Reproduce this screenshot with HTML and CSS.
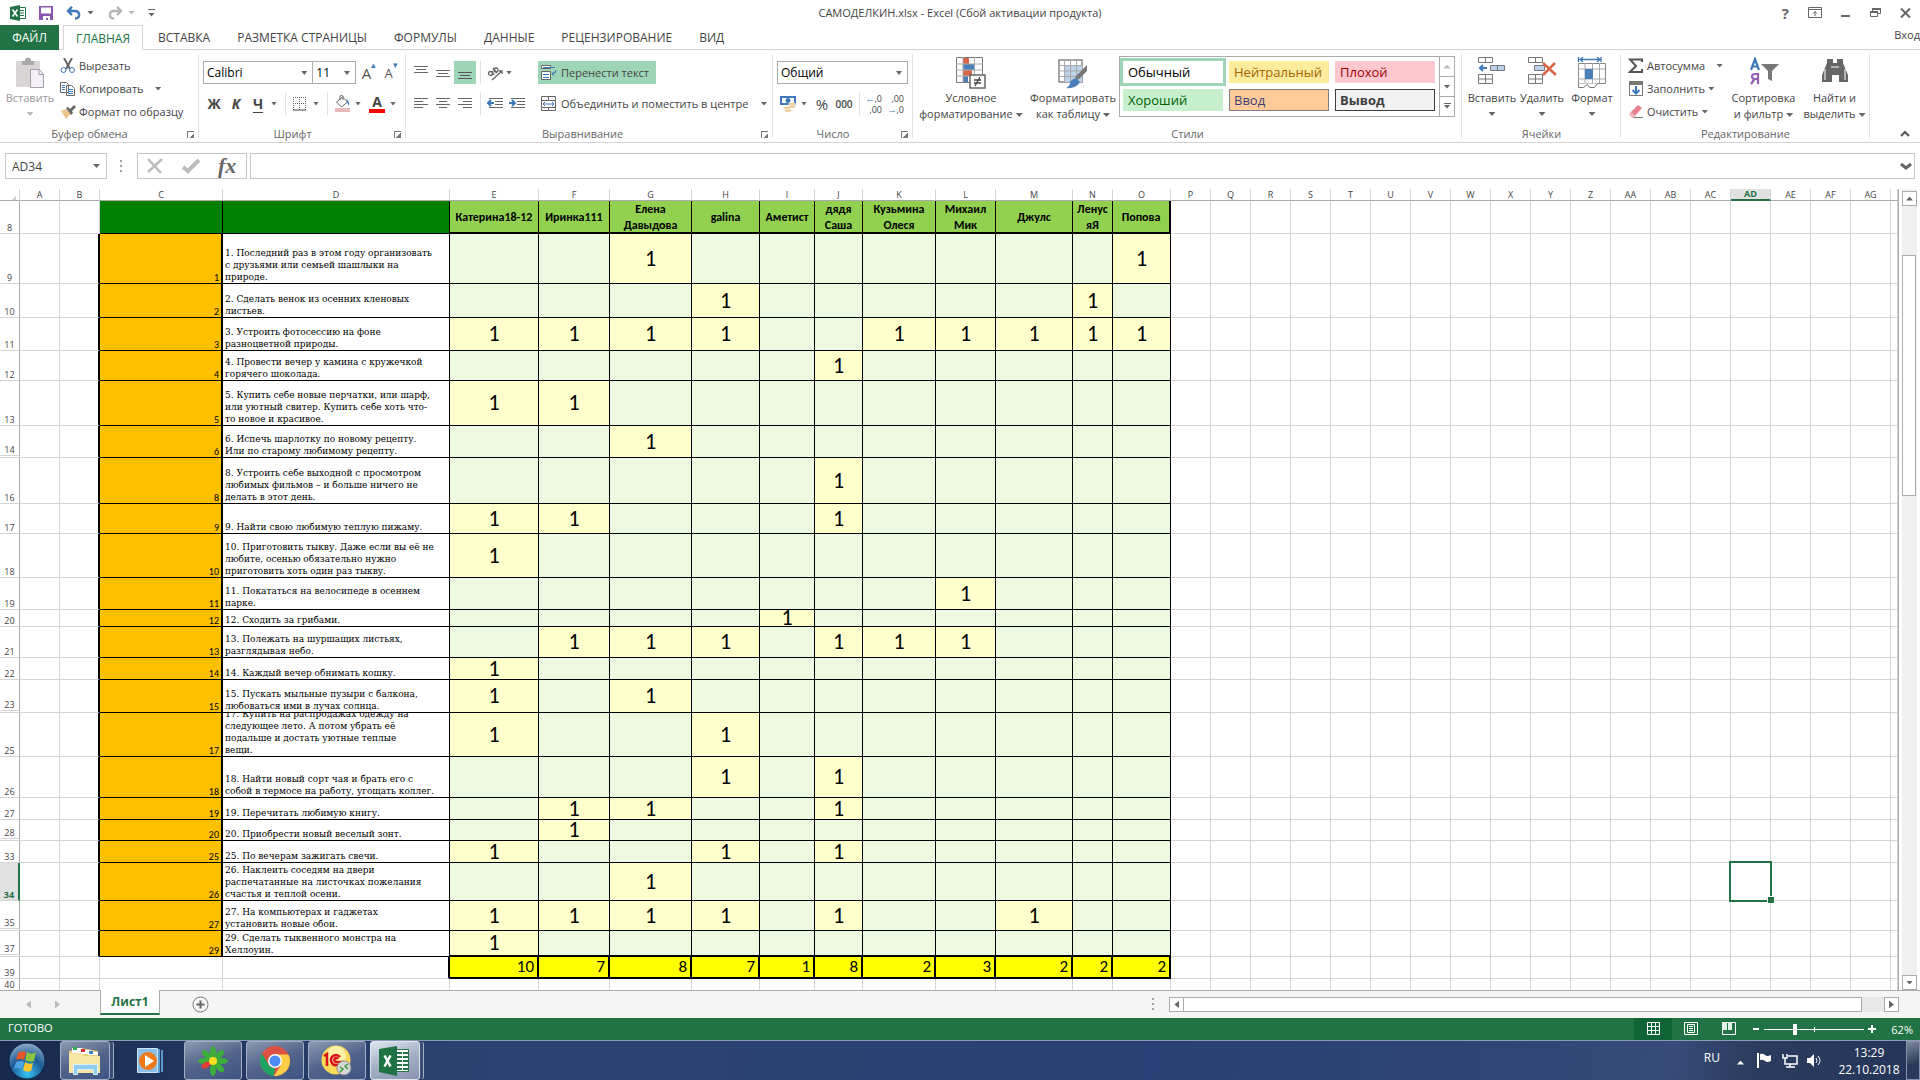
FILE: index.html
```html
<!DOCTYPE html>
<html lang="ru">
<head>
<meta charset="utf-8">
<title>САМОДЕЛКИН.xlsx - Excel</title>
<link rel="stylesheet" href="styles.css">
</head>
<body>
<div class="app">
  <header class="titlebar">
    <div class="quick">
      <svg class="q-logo" width="16" height="16" viewBox="0 0 16 16"><path fill="#217346" d="M0 2l10-2v16L0 14z"/><path fill="#fff" stroke="#217346" d="M10 2.500h5.500v11H10"/><path stroke="#217346" d="M10 5.500h4M10 8h4M10 10.500h4"/><path stroke="#fff" stroke-width="1.600" d="M2.500 4.500l5 7M7.500 4.500l-5 7"/></svg>
      <button class="ghost" aria-label="Сохранить"><svg width="14" height="14" viewBox="0 0 14 14"><path fill="#8a57b0" d="M0 0h14v14H0z"/><path fill="#fff" d="M2 1.500h10v6H2zM4 10h7v4H9v-2H7v2H4z"/></svg></button>
      <button class="ghost drop" aria-label="Отменить"><svg width="16" height="14" viewBox="0 0 16 14"><path fill="none" stroke="#3e78b8" stroke-width="2.400" d="M2 5h7c5 0 6 7 0 7.500M6 .8L2 5l4 4"/></svg><i class="arr"></i></button>
      <button class="ghost drop dim" aria-label="Вернуть"><svg width="16" height="14" viewBox="0 0 16 14"><path fill="none" stroke="#b5b5b5" stroke-width="2.400" d="M14 5H7c-5 0-6 7 0 7.500M10 .8L14 5l-4 4"/></svg><i class="arr"></i></button>
      <button class="ghost more" aria-label="Настройка панели"><i class="arr"></i></button>
    </div>
    <div class="doc-title">САМОДЕЛКИН.xlsx - Excel (Сбой активации продукта)</div>
    <div class="win">
      <button class="ghost help" aria-label="Справка">?</button>
      <button class="ghost" aria-label="Параметры ленты"><svg width="14" height="11" viewBox="0 0 14 11"><path fill="none" stroke="#666" d="M.5.500h13v10H.500zM.5 2.500h13M7 9V4.500M5 6.500l2-2 2 2"/></svg></button>
      <button class="ghost" aria-label="Свернуть"><svg width="10" height="10"><path fill="#666" d="M0 7h9v2H0z"/></svg></button>
      <button class="ghost" aria-label="Восстановить"><svg width="11" height="10" viewBox="0 0 11 10"><path fill="none" stroke="#666" d="M2.500 3V.500h8v5H8M.5 3.500h7v5H.500z"/><path fill="#666" d="M2 0h9v2H2zM0 3h8v2H0z"/></svg></button>
      <button class="ghost" aria-label="Закрыть"><svg width="11" height="10"><path stroke="#666" stroke-width="2" d="M1 .5l9 9M10 .5l-9 9"/></svg></button>
    </div>
  </header>

  <nav class="tabs">
    <a href="#" class="tab file">ФАЙЛ</a>
    <a href="#" class="tab on">ГЛАВНАЯ</a>
    <a href="#" class="tab">ВСТАВКА</a>
    <a href="#" class="tab">РАЗМЕТКА СТРАНИЦЫ</a>
    <a href="#" class="tab">ФОРМУЛЫ</a>
    <a href="#" class="tab">ДАННЫЕ</a>
    <a href="#" class="tab">РЕЦЕНЗИРОВАНИЕ</a>
    <a href="#" class="tab">ВИД</a>
    <a href="#" class="signin">Вход</a>
  </nav>

  <section class="ribbon">
    <div class="group g-clip">
      <div class="body">
        <button class="big dim"><svg width="30" height="32" viewBox="0 0 30 32"><rect x="1" y="4" width="24" height="26" rx="1" fill="#d9d4d6"/><path fill="#a9a9a9" d="M7 4h3V2q3-3 6 0v2h3v4H7z"/><path fill="#f4eff8" stroke="#a3a0a6" d="M15.500 12.500h9l4 5v13h-13z"/><path fill="none" stroke="#a3a0a6" d="M24 12.500v5h5"/></svg><span>Вставить</span><i class="arr"></i></button>
        <div class="stack">
          <button class="row"><svg width="16" height="16" viewBox="0 0 16 16"><path stroke="#666" stroke-width="2" d="M4 0l6 11M12 0L6 11"/><circle cx="3.500" cy="12" r="2.500" fill="none" stroke="#3e78b8"/><circle cx="12" cy="12" r="2.500" fill="none" stroke="#3e78b8"/></svg><span>Вырезать</span></button>
          <button class="row"><svg width="16" height="16" viewBox="0 0 16 16"><path fill="#fff" stroke="#666" d="M.5 1.500h6l2 2v8h-8zM6.500 4.500h5l3 3v7h-8z"/><path stroke="#3e78b8" d="M2 4.500h3M2 6.500h3M2 8.500h3M8 8.500h5M8 10.500h5M8 12.500h5"/></svg><span>Копировать</span><i class="arr far"></i></button>
          <button class="row"><svg width="16" height="16" viewBox="0 0 16 16"><path fill="#ecc58b" d="M1 7l5-2 5 5-5 5z"/><path fill="#666" d="M6 4l2-1 2 2 4-4 2 2-4 4 1 2-2 2z"/></svg><span>Формат по образцу</span></button>
        </div>
      </div>
      <div class="caption">Буфер обмена</div><i class="launch"></i>
    </div>

    <div class="group g-font">
      <div class="body lines">
        <div class="line">
          <label class="combo c-font"><select aria-label="Шрифт"><option>Calibri</option></select></label><label class="combo c-size"><select aria-label="Размер"><option>11</option></select></label>
          <button class="tool wide22 letter">A<sup>▴</sup></button><button class="tool wide22 letter sm">A<sup>▾</sup></button>
        </div>
        <div class="line">
          <button class="tool wide22 letter b">Ж</button><button class="tool wide22 letter b it">К</button><button class="tool wide22 letter b un">Ч</button><i class="arr gap"></i><i class="sep"></i>
          <button class="tool wide22" aria-label="Границы"><svg width="14" height="14" viewBox="0 0 14 14"><path fill="none" stroke="#666" stroke-dasharray="1 1" d="M.5 0v13M6.500 0v13M12.500 0v13M0 .5h13M0 6.500h13"/><path stroke="#444" d="M0 13h13"/></svg></button><i class="arr gap"></i><i class="sep"></i>
          <button class="tool wide22" aria-label="Заливка"><svg width="17" height="17" viewBox="0 0 17 17"><path fill="#e8b9b9" d="M1 13h15v4H1z"/><path fill="#fff" stroke="#666" d="M2.500 7l6-5 5 5-6 5z"/><path fill="none" stroke="#666" d="M6 5V1q1.500-1.500 3 0v4"/><path fill="#3e78b8" d="M12 4q4 2 3 7l-2-4z"/></svg></button><i class="arr gap"></i>
          <button class="tool wide22 letter b fc">A</button><i class="arr gap"></i>
        </div>
      </div>
      <div class="caption">Шрифт</div><i class="launch"></i>
    </div>

    <div class="group g-align">
      <div class="body">
        <div class="lines g-a1">
          <div class="line">
            <button class="tool wide22" aria-label="По верху"><svg width="14" height="14"><path stroke="#666" d="M0 .5h14M2 3.500h10M0 6.500h14"/></svg></button><button class="tool wide22" aria-label="По середине"><svg width="14" height="14"><path stroke="#666" d="M0 4.500h14M2 7.500h10M0 10.500h14"/></svg></button><button class="tool wide22 lit" aria-label="По низу"><svg width="14" height="14"><path stroke="#555" d="M0 6.500h14M2 9.500h10M0 12.500h14"/></svg></button>
            <i class="sep"></i><button class="tool wide22" aria-label="Ориентация"><svg width="16" height="16" viewBox="0 0 16 16"><g fill="none" stroke="#666" stroke-width="1.300"><circle cx="3.500" cy="8.500" r="2"/><path d="M5 6l2 4M6 3l4 5"/><circle cx="9" cy="5" r="2"/><path d="M5 15L15 6M15 9V6h-3"/></g></svg></button><i class="arr gap"></i>
          </div>
          <div class="line">
            <button class="tool wide22" aria-label="По левому краю"><svg width="14" height="12"><path stroke="#666" d="M0 .5h14M0 3.500h9M0 6.500h14M0 9.500h9"/></svg></button><button class="tool wide22" aria-label="По центру"><svg width="14" height="12"><path stroke="#666" d="M0 .5h14M3 3.500h8M0 6.500h14M3 9.500h8"/></svg></button><button class="tool wide22" aria-label="По правому краю"><svg width="14" height="12"><path stroke="#666" d="M0 .5h14M5 3.500h9M0 6.500h14M5 9.500h9"/></svg></button>
            <i class="sep"></i><button class="tool wide22" aria-label="Уменьшить отступ"><svg width="16" height="12"><path stroke="#666" d="M2 .5h14M8 3.500h8M8 6.500h8M2 9.500h14"/><path fill="none" stroke="#3e78b8" stroke-width="2" d="M7 5H1M4 2L1 5l3 3"/></svg></button><button class="tool wide22" aria-label="Увеличить отступ"><svg width="16" height="12"><path stroke="#666" d="M2 .5h14M8 3.500h8M8 6.500h8M2 9.500h14"/><path fill="none" stroke="#3e78b8" stroke-width="2" d="M0 5h6M3 2l3 3-3 3"/></svg></button>
          </div>
        </div>
        <div class="lines g-a2">
          <div class="line"><button class="tool text lit"><svg width="16" height="16" viewBox="0 0 16 16"><path fill="#fff" stroke="#666" d="M.5.500h9v3h-9zM.5 6.500h9v8h-9z"/><path fill="none" stroke="#3e78b8" d="M2 2.500h12M2 9.500h6M2 12.500h6M15 5q0 4-4 4M13 6.500L11 9l2 2"/></svg><span>Перенести текст</span></button></div>
          <div class="line"><button class="tool text"><svg width="16" height="16" viewBox="0 0 16 16"><path fill="none" stroke="#666" d="M.5.500h14v14H.500zM.5 4.500h14M.5 11.500h14M7.500 0v4M7.500 12v3"/><path fill="none" stroke="#3e78b8" d="M2 8h11M4 6L2 8l2 2M11 6l2 2-2 2"/></svg><span>Объединить и поместить в центре</span><i class="arr far"></i></button></div>
        </div>
      </div>
      <div class="caption shift">Выравнивание</div><i class="launch"></i>
    </div>

    <div class="group g-num">
      <div class="body lines">
        <div class="line"><label class="combo c-num"><select aria-label="Формат числа"><option>Общий</option></select></label></div>
        <div class="line">
          <button class="tool wide22" aria-label="Денежный"><svg width="16" height="16" viewBox="0 0 16 16"><path fill="#3e78b8" d="M0 0h16v9H0z"/><path fill="#fff" d="M2 2h12v5H2z"/><circle cx="8" cy="4.500" r="2.500" fill="#3e78b8"/><g fill="#ecc58b" stroke="#fff" stroke-width=".5"><ellipse cx="12" cy="8" rx="3.500" ry="1.500"/><ellipse cx="12" cy="10.500" rx="3.500" ry="1.500"/><ellipse cx="7" cy="12" rx="3.500" ry="1.500"/><ellipse cx="8" cy="14.500" rx="3.500" ry="1.500"/></g></svg></button><i class="arr gap"></i>
          <button class="tool wide22 pct">%</button><button class="tool wide22 zeros">000</button><i class="sep"></i>
          <button class="tool wide22 dec"><span><b>←</b>,0</span><span>,00</span></button><button class="tool wide22 dec"><span>,00</span><span><b>→</b>,0</span></button>
        </div>
      </div>
      <div class="caption">Число</div><i class="launch"></i>
    </div>

    <div class="group g-style">
      <div class="body">
        <button class="big w116"><svg width="30" height="32" viewBox="0 0 30 32"><path fill="#fff" stroke="#777" d="M.5.500h26v25H.500z"/><path fill="#dc6547" d="M7 1h6v6H7zM7 13h9v6H7z"/><path fill="#4a7fb9" d="M7 7h11v6H7zM7 19h5v6H7z"/><path stroke="#aaa" d="M0 7h27M0 13h27M0 19h27M7 0v26M18.500 0v26"/><path fill="#fff" stroke="#666" stroke-width="1.500" d="M14 18h15v13H14z"/><path stroke="#444" stroke-width="1.300" d="M18 23h7M18 26h7M24 20l-5 9"/></svg><span>Условное</span><span>форматирование<i class="arr"></i></span></button>
        <button class="big w88"><svg width="30" height="32" viewBox="0 0 30 32"><path fill="#fff" stroke="#888" stroke-width="1.500" d="M1 3h23v22H1z"/><path fill="#bcd0e8" d="M7 8h17v17H7z"/><path stroke="#aaa" d="M1 8.500h23M1 14h23M1 19.500h23M6.500 3v22M12.500 3v22M18.500 3v22"/><path fill="#777" d="M29 8v6l-9 9-3-3z"/><path fill="#4a7fb9" d="M18 21l4 4q-4 7-14 6 4-2 4-5t6-5z"/></svg><span>Форматировать</span><span>как таблицу<i class="arr"></i></span></button>
        <div class="gallery">
          <div class="swatches">
            <button class="sw normal">Обычный</button><button class="sw neutral">Нейтральный</button><button class="sw bad">Плохой</button>
            <button class="sw good">Хороший</button><button class="sw input">Ввод</button><button class="sw output">Вывод</button>
          </div>
          <div class="scroller"><button aria-label="Вверх" class="dim"><i class="arr up"></i></button><button aria-label="Вниз"><i class="arr"></i></button><button aria-label="Ещё" class="more"><i class="arr"></i></button></div>
        </div>
      </div>
      <div class="caption">Стили</div>
    </div>

    <div class="group g-cells">
      <div class="body">
        <button class="big w50"><svg width="30" height="32" viewBox="0 0 30 32"><g fill="#fff" stroke="#777"><path d="M1.500.500h14v5h-14zM8.500.500v5M1.500 17.500h14v9h-14zM8.500 17.500v9M1.500 22h14"/></g><path fill="#bcd0e8" stroke="#777" d="M13.500 8.500h14v5h-14zM20.500 8.500v5"/><path fill="none" stroke="#3e78b8" stroke-width="2" d="M10 11H3M6 8l-3 3 3 3"/></svg><span>Вставить</span><i class="arr"></i></button>
        <button class="big w50"><svg width="30" height="32" viewBox="0 0 30 32"><g fill="#fff" stroke="#777"><path d="M1.500.500h14v5h-14zM8.500.500v5M1.500 17.500h14v9h-14zM8.500 17.500v9M1.500 22h14"/></g><path fill="#bcd0e8" stroke="#777" d="M7.500 8.500h10v5h-10z"/><path stroke="#dc6547" stroke-width="2.500" d="M16 6l13 12M28 6L16 18"/></svg><span>Удалить</span><i class="arr"></i></button>
        <button class="big w50"><svg width="30" height="32" viewBox="0 0 30 32"><path fill="none" stroke="#3e78b8" stroke-width="1.300" d="M1.500 0v5M24 0v5M3 2.500h20M6 0L3 2.500 6 5M20 0l3 2.500L20 5"/><path fill="#fff" stroke="#888" d="M1.500 6.500h27v20h-27z"/><path stroke="#aaa" d="M1 12h27M1 22h27M8 6v20M15.500 6v20M22.500 6v20"/><path fill="#4a7fb9" d="M8 12h8v10H8z"/><path fill="#fff" stroke="#777" d="M1.500 26.500v4h5l4-3 2 3h5l3-4"/></svg><span>Формат</span><i class="arr"></i></button>
      </div>
      <div class="caption">Ячейки</div>
    </div>

    <div class="group g-edit">
      <div class="body">
        <div class="stack">
          <button class="row"><svg width="16" height="16" viewBox="0 0 16 16"><path fill="none" stroke="#555" stroke-width="2" d="M14 4V1.500H2L8 8l-6 6h12V11"/></svg><span>Автосумма</span><i class="arr far"></i></button>
          <button class="row"><svg width="16" height="16" viewBox="0 0 16 16"><path fill="#fff" stroke="#777" d="M1.500.500h13v14h-13z"/><path fill="#777" d="M1 0h14v4H1z"/><path fill="none" stroke="#3e78b8" stroke-width="2" d="M8 5v7M4.500 9L8 12.500 11.500 9"/></svg><span>Заполнить</span><i class="arr"></i></button>
          <button class="row"><svg width="16" height="16" viewBox="0 0 16 16"><path fill="#e8828f" d="M2 9l8-8 4 3-8 9z"/><path fill="#f3b5bd" d="M1 10l2-2 5 4-2 2H4z"/><path stroke="#777" d="M6 13.500h9"/></svg><span>Очистить</span><i class="arr"></i></button>
        </div>
        <button class="big w72"><svg width="30" height="32" viewBox="0 0 30 32"><path fill="none" stroke="#3e78b8" stroke-width="2.200" d="M2 13L6 2l4 11M3.500 9.500h5"/><path fill="none" stroke="#9460b8" stroke-width="2.200" d="M9 27V17H6q-3 0-3 2.500T6 22h3M5.500 22L2 27"/><path fill="#777" d="M12 7h18l-7 7v10l-4-2v-8z"/></svg><span>Сортировка</span><span>и фильтр<i class="arr"></i></span></button>
        <button class="big w72"><svg width="30" height="32" viewBox="0 0 30 32"><path fill="#666" d="M7 2h6v4h4V2h6v4l5 12v7h-9v-7h-3l-1 0h-3v7H2v-7L7 6z"/><path stroke="#fff" d="M5 12v11M25 12v11M11 10h8"/></svg><span>Найти и</span><span>выделить<i class="arr"></i></span></button>
      </div>
      <div class="caption">Редактирование</div>
    </div>
    <button class="ghost collapse" aria-label="Свернуть ленту"><svg width="10" height="7"><path fill="none" stroke="#555" stroke-width="2" d="M1 6l4-4 4 4"/></svg></button>
  </section>

  <section class="formula">
    <label class="namebox"><input aria-label="Имя ячейки" value="AD34"><i class="arr"></i></label>
    <span class="grip"></span>
    <div class="fx"><svg width="18" height="16" viewBox="0 0 18 16"><path stroke="#bbb" stroke-width="2.400" d="M2 1l13 14M16 1L2 14"/></svg><svg width="20" height="16" viewBox="0 0 20 16"><path fill="none" stroke="#bbb" stroke-width="4" d="M2 9l5 4L18 2"/></svg><span class="fxi">fx</span></div>
    <label class="fbar"><input aria-label="Строка формул"><svg width="12" height="9" viewBox="0 0 12 9"><path fill="none" stroke="#666" stroke-width="3" d="M1 2l5 4 5-4"/></svg></label>
  </section>

  <main class="work">
    <div class="sheet"><table id="grid"></table></div>
    <div class="vscroll"><button aria-label="Вверх"><i class="arr up"></i></button><div class="vthumb"></div><div class="vrest"></div><button aria-label="Вниз"><i class="arr"></i></button></div>
  </main>

  <footer class="sheets">
    <div class="nav"><i class="tri left"></i><i class="tri right"></i></div>
    <button class="sheet-tab">Лист1</button>
    <button class="ghost add" aria-label="Новый лист"><svg width="17" height="17" viewBox="0 0 17 17"><circle cx="8.500" cy="8.500" r="7.500" fill="none" stroke="#777"/><path stroke="#666" stroke-width="2" d="M4.500 8.500h8M8.500 4.500v8"/></svg></button>
    <span class="grip push"></span>
    <div class="hscroll"><button aria-label="Влево"><i class="tri left"></i></button><div class="hthumb"></div><div class="hrest"></div><button aria-label="Вправо"><i class="tri right"></i></button></div>
  </footer>

  <div class="status">
    <span class="ready">ГОТОВО</span>
    <button class="view on" aria-label="Обычный"><svg width="13" height="13"><path fill="none" stroke="#fff" d="M.5.500h12v12H.500zM4.500 0v13M8.500 0v13M0 4.500h13M0 8.500h13"/></svg></button>
    <button class="view" aria-label="Разметка страницы"><svg width="14" height="13"><path fill="none" stroke="#fff" d="M.5.500h13v12H.500zM3.500 2.500h7v8h-7zM5 4.500h4M5 6.500h4M5 8.500h4"/></svg></button>
    <button class="view" aria-label="Страничный"><svg width="14" height="13"><path fill="none" stroke="#fff" d="M.5.500h13v12H.500z"/><path fill="#e3f0e8" d="M0 0h5v8H0zM6 0h4v8H6z"/></svg></button>
    <div class="zoom"><button aria-label="Уменьшить"><svg width="8" height="8"><path fill="#fff" d="M1 3h6v2H1z"/></svg></button><input type="range" min="0" max="100" value="30" aria-label="Масштаб"><button aria-label="Увеличить"><svg width="8" height="8"><path fill="#fff" d="M0 3h8v2H0zM3 0h2v8H3z"/></svg></button></div>
    <span class="pc">62%</span>
  </div>

  <div class="taskbar">
    <button class="orb" aria-label="Пуск"><svg width="38" height="38" viewBox="0 0 38 38"><defs><radialGradient id="o" cx=".5" cy=".85" r=".9"><stop offset="0" stop-color="#37c4f5"/><stop offset=".5" stop-color="#1d5c97"/><stop offset="1" stop-color="#9db6cc"/></radialGradient></defs><circle cx="19" cy="19" r="18" fill="url(#o)" stroke="#0d2343"/><path fill="#e8562a" d="M10 11q4-3 8-1l-2 8q-4-2-8 0z"/><path fill="#8cc63f" d="M19 10q5 3 9 0l-2 9q-4 2-9-1z"/><path fill="#4fa3e3" d="M8 20q4-2 8 0l-2 7q-4-2-8 0z"/><path fill="#fcc62d" d="M17 20q4 3 8 1l-2 8q-4 2-8-1z"/></svg></button>
    <button class="task pile" aria-label="Проводник"><svg width="34" height="30" viewBox="0 0 34 30"><path fill="#e8cf82" d="M1 5l12-3 17 3v22H1z"/><path fill="#fff" d="M4 2h10v5H4zM12 4h10v4H12zM20 6h10v3H20z"/><path fill="#2bb24a" d="M5 1h4v3H5z"/><path fill="#d33" d="M13 3h4v3h-4z"/><path fill="#38c" d="M21 5h4v3h-4z"/><path fill="#f6e5a4" d="M1 7h12l3 3h16v17H1z"/><path fill="#8fcdf0" stroke="#d8f0fc" d="M5.500 18.500h24v10h-4v-5h-16v5h-4z"/></svg></button>
    <button class="task plain" aria-label="Проигрыватель"><svg width="28" height="26" viewBox="0 0 28 26"><path fill="#5b9bd0" d="M20 1h3v24h-3zM24 2h2v22h-2z"/><path fill="#8dbfe6" stroke="#cfe5f6" d="M.5.500h20v24H.500z"/><circle cx="11" cy="13" r="9" fill="#f07a1a"/><path fill="#fff" d="M8 7l9 6-9 6z"/></svg></button>
    <button class="task" aria-label="ICQ"><svg width="30" height="30" viewBox="-15 -15 30 30"><g fill="#3cae3a"><ellipse cy="-9" rx="3" ry="6"/><ellipse cy="-9" rx="3" ry="6" transform="rotate(45)"/><ellipse cy="-9" rx="3" ry="6" transform="rotate(90)"/><ellipse cy="-9" rx="3" ry="6" transform="rotate(135)"/><ellipse cy="-9" rx="3" ry="6" transform="rotate(180)"/><ellipse cy="-9" rx="3" ry="6" transform="rotate(270)"/><ellipse cy="-9" rx="3" ry="6" transform="rotate(315)"/></g><ellipse cy="-8" rx="3" ry="5" fill="#e33d34" transform="rotate(240)"/><circle r="4" fill="#ffdf1f"/></svg></button>
    <button class="task" aria-label="Chrome"><svg width="30" height="30" viewBox="-15 -15 30 30"><circle r="15" fill="#dd5144"/><path fill="#1da462" d="M-13-7.500L-5.500 5 0 7.500-1 15A15 15 0 0 1-13-7.500z"/><path fill="#ffcd46" d="M0-6.500h13.500A15 15 0 0 1-1 15L6 4z"/><circle r="7" fill="#fff"/><circle r="5.500" fill="#4c8bf5"/></svg></button>
    <button class="task" aria-label="1С"><svg width="32" height="32" viewBox="0 0 32 32"><circle cx="15" cy="15" r="14.500" fill="#fbd95a"/><circle cx="15" cy="11" r="10" fill="#fff0a8"/><path fill="none" stroke="#d8151b" stroke-width="2.500" d="M3 11l3-2v12M19 12a5 5 0 1 0-3 8h7M17 14a2 2 0 1 0-2 3h8"/><circle cx="23" cy="23" r="7" fill="#d6d6d6" stroke="#8d8d8d"/><path fill="none" stroke="#3b9a3b" stroke-width="1.500" d="M19 22l3 2-3 3M27 19l-3 2 3 3"/></svg></button>
    <button class="task pile active" aria-label="Excel"><svg width="32" height="30" viewBox="0 0 32 30"><path fill="#fff" stroke="#217346" d="M17 3.500h12.500v22H17z"/><path stroke="#217346" stroke-width="2" stroke-dasharray="5 1" d="M18 7h11M18 11h11M18 15h11M18 19h11M18 23h11"/><path fill="#1f7244" d="M0 3l18-3v30L0 26z"/><path stroke="#fff" stroke-width="2.500" d="M5.500 9.500l6 11M11.500 9.500l-6 11"/></svg></button>
    <div class="tray">
      <span class="lang">RU</span><i class="arr up"></i>
      <svg width="16" height="16" viewBox="0 0 16 16"><path fill="#fff" d="M0 0h2v15H0zM3 1q3-1 5 1t6 0v6q-4 2-6 0T3 7z"/></svg>
      <svg width="16" height="16" viewBox="0 0 16 16"><path fill="none" stroke="#fff" stroke-width="1.500" d="M6 3h9v8H3V8M1 1v4h4V1M3 5v3M4 14h9M8 11v3"/></svg>
      <svg width="15" height="15" viewBox="0 0 15 15"><path fill="#fff" d="M0 5h3l4-4v13L3 10H0z"/><path fill="none" stroke="#fff" d="M9 5q2 2.500 0 5M11 3q4 4.500 0 9"/></svg>
      <div class="clock"><span>13:29</span><span>22.10.2018</span></div>
    </div>
    <button class="peek" aria-label="Свернуть все окна"></button>
  </div>
</div>
<script src="sheet.js"></script>
</body>
</html>
```

FILE: styles.css
```css
* { box-sizing: border-box; }
body { margin: 0; font-family: "Open Sans", "Noto Sans", sans-serif; font-size: 12px; color: #444; background: #fff; overflow: hidden; }
button, input, select { font: inherit; color: inherit; margin: 0; padding: 0; border: 0; background: none; border-radius: 0; }
a { color: inherit; text-decoration: none; }
svg { display: block; flex: none; fill: none; }
.app { height: 100vh; display: flex; flex-direction: column; }

.arr { display: inline-block; flex: none; width: 7px; height: 4px; background: #666; clip-path: polygon(0 0, 100% 0, 50% 100%); vertical-align: middle; }
.arr.up { clip-path: polygon(50% 0, 100% 100%, 0 100%); }
.arr.far { margin-left: 8px; }
.arr.gap { width: 6px; }
.dim .arr { background: #bbb; }
.tri { width: 5px; height: 8px; background: #666; clip-path: polygon(0 0, 100% 50%, 0 100%); }
.tri.left { clip-path: polygon(100% 0, 0 50%, 100% 100%); }
.ghost { display: flex; align-items: center; justify-content: center; }
.grip { width: 2px; height: 12px; background: repeating-linear-gradient(#a0a0a0 0 2px, transparent 2px 5px); }

/* title */
.titlebar { display: grid; grid-template-columns: 1fr auto 1fr; height: 25px; flex: none; align-items: center; }
.quick { display: flex; align-items: center; gap: 13px; padding-left: 10px; }
.quick .drop { gap: 5px; }
.quick .more { padding-top: 4px; }
.quick .more, .scroller .more { background: linear-gradient(#666, #666) center 0 / 7px 1px no-repeat; }
.doc-title { font-size: 11px; }
.win { display: flex; justify-content: flex-end; align-items: center; gap: 19px; padding-right: 9px; }
.help { font-weight: 700; font-size: 15px; color: #666; line-height: 16px; }

/* tabs */
.tabs { display: flex; height: 25px; flex: none; border-bottom: 1px solid #d4d4d4; align-items: flex-start; }
.tab { height: 25px; line-height: 26px; padding: 0 12px; border: 1px solid transparent; border-width: 0 1px; margin-right: 1px; }
.tab.file { width: 59px; padding: 0; text-align: center; background: #217346; color: #fff; margin-right: 4px; border: 0; }
.tab.on { width: 80px; padding: 0; text-align: center; color: #217346; background: #fff; border: 1px solid #d4d4d4; border-bottom: 0; line-height: 25px; margin-right: 2px; }
.signin { margin-left: auto; line-height: 20px; font-size: 11px; }

/* ribbon */
.ribbon { display: flex; height: 93px; border-bottom: 1px solid #d4d4d4; flex: none; font-size: 11px; }
.group { position: relative; display: flex; flex-direction: column; flex: none; padding-top: 4px; background: linear-gradient(#e1e1e1, #e1e1e1) right 4px / 1px 84px no-repeat; }
.g-clip { width: 199px; } .g-font { width: 207px; } .g-align { width: 367px; } .g-num { width: 140px; }
.g-style { width: 549px; } .g-cells { width: 159px; } .g-edit { width: 249px; }
.body { display: flex; height: 71px; flex: none; }
.caption { text-align: center; color: #666; line-height: 18px; padding-right: 20px; }
.g-style .caption, .g-cells .caption { padding-right: 0; }
.g-edit .caption { padding-right: 0; }
.caption.shift { text-align: left; padding-left: 136px; }
.launch { position: absolute; right: 5px; bottom: 4px; width: 7px; height: 7px; border: 1px solid #777; border-width: 1px 0 0 1px; background: linear-gradient(135deg, transparent 50%, #777 50%) 1px 1px / 5px 5px no-repeat; }
.collapse { margin-left: auto; align-self: flex-end; width: 30px; height: 18px; }
.big { display: flex; flex-direction: column; align-items: center; padding-top: 3px; line-height: 16px; white-space: nowrap; }
.big svg { margin-bottom: 1px; }
.big > .arr { margin-top: 6px; }
.big span .arr { margin-left: 3px; }
.big.dim { width: 60px; color: #999; }
.w116 { width: 116px; } .w88 { width: 88px; } .w50 { width: 50px; } .w72 { width: 72px; }
.stack { display: flex; flex-direction: column; }
.row { display: flex; align-items: center; gap: 3px; height: 23px; white-space: nowrap; }
.lines { display: flex; flex-direction: column; gap: 8px; padding: 7px 4px 0; }
.g-a1 { width: 132px; flex: none; }
.g-a2 { padding-left: 0; padding-right: 0; }
.line { display: flex; height: 23px; flex: none; align-items: center; }
.combo { position: relative; height: 23px; border: 1px solid #ababab; font-size: 12px; }
.combo::after { content: ""; position: absolute; right: 5px; top: 9px; width: 6px; height: 4px; background: #666; clip-path: polygon(0 0, 100% 0, 50% 100%); }
.combo select { appearance: none; width: 100%; height: 100%; padding: 0 3px; color: #000; }
.c-font { width: 111px; } .c-size { width: 44px; margin-left: -1px; margin-right: 2px; } .c-num { width: 131px; }
.tool { display: flex; align-items: center; justify-content: center; height: 23px; }
.wide22 { width: 22px; flex: none; }
.tool.text { gap: 4px; padding: 0 7px 0 3px; white-space: nowrap; }
.lit { background: #9fd5b7; }
.letter { font-size: 15px; color: #555; line-height: 16px; }
.letter sup { font-size: 9px; color: #3e78b8; line-height: 8px; align-self: flex-start; }
.letter.sm { font-size: 13px; }
.b { font-weight: 700; font-size: 14px; color: #444; }
.it { font-style: italic; }
.un { text-decoration: underline; text-underline-offset: 3px; }
.fc { box-shadow: inset 0 -4px 0 #f00; height: 18px; width: 16px; margin: 0 3px 0 4px; align-items: flex-start; line-height: 14px; }
.sep { width: 1px; height: 23px; background: #e1e1e1; margin: 0 3px 0 4px; flex: none; }
.g-font .gap, .g-num .gap { margin: 0 4px 0 2px; }
.pct { font-size: 15px; }
.zeros { font-size: 10px; font-weight: 600; }
.dec { font-size: 9px; line-height: 11px; flex-direction: column; align-items: flex-end; padding-right: 3px; }
.dec b { color: #3e78b8; }
.gallery { display: flex; border: 1px solid #ababab; height: 61px; margin: 2px 0 0 2px; width: 336px; }
.swatches { display: grid; grid-template-columns: repeat(3, 100px); grid-auto-rows: 22px; gap: 6px; padding: 4px 3px; flex: 1; }
.sw { font-size: 13px; text-align: left; padding-left: 4px; line-height: 18px; border: 1px solid transparent; white-space: nowrap; }
.normal { color: #000; outline: 3px solid #9fd5b7; }
.neutral { background: #ffeb9c; color: #9c6500; }
.bad { background: #ffc7ce; color: #9c0006; }
.good { background: #c6efce; color: #006100; }
.input { background: #ffcc99; color: #3f3f76; border-color: #7f7f7f; }
.output { background: #f2f2f2; color: #3f3f3f; border-color: #3f3f3f; font-weight: 700; }
.scroller { width: 15px; display: flex; flex-direction: column; border-left: 1px solid #ababab; }
.scroller button { flex: 1; display: flex; align-items: center; justify-content: center; }
.scroller button + button { border-top: 1px solid #ababab; }
.scroller .more { background-position: center 6px; }
.g-cells .body { padding-left: 5px; }
.g-edit .stack { width: 107px; padding-left: 7px; flex: none; }

/* formula bar */
.formula { display: flex; height: 46px; padding: 10px 5px 10px; flex: none; align-items: stretch; }
.formula > * { height: 26px; }
.namebox { width: 102px; border: 1px solid #c6c6c6; display: flex; align-items: center; padding: 0 6px; }
.namebox input { width: 100%; min-width: 0; font-size: 12px; }
.formula .grip { height: 12px; margin: 7px 15px 0 13px; }
.fx { width: 110px; border: 1px solid #c6c6c6; display: flex; align-items: center; padding-left: 8px; gap: 17px; margin-right: 3px; }
.fxi { font: italic 700 22px/20px "Liberation Serif", serif; color: #666; }
.fbar { flex: 1; border: 1px solid #c6c6c6; display: flex; align-items: center; padding-right: 2px; }
.fbar input { flex: 1; height: 100%; }

/* sheet */
.work { flex: 1; min-height: 0; display: flex; }
.sheet { flex: 1; min-width: 0; overflow: hidden; border-right: 1px solid #ababab; }
#grid { border-collapse: separate; border-spacing: 0; table-layout: fixed; width: 100%; font-family: Carlito, Lato, "Open Sans", sans-serif; }
#grid th, #grid td { padding: 0; border: 1px solid #d4d4d4; border-width: 0 1px 1px 0; overflow: hidden; vertical-align: bottom; }
#grid thead th { height: 12px; font: 9px/11px "Open Sans", sans-serif; border-bottom-color: #ababab; color: #444; }
#grid thead th.cur { background: #e1e1e1; color: #217346; font-weight: 700; border-bottom: 2px solid #217346; line-height: 10px; }
.corner i { display: block; width: 4px; height: 4px; margin: 3px 0 0 12px; background: #ccc; clip-path: polygon(100% 0, 100% 100%, 0 100%); }
#grid tbody th { font: 9px/11px "Open Sans", sans-serif; border-right-color: #ababab; color: #444; }
#grid tbody th.skip { border-bottom: 3px double #d4d4d4; }
#grid tbody th.cur { background: #e1e1e1; color: #217346; font-weight: 700; border-right: 2px solid #217346; }
.cell { display: flex; height: calc(var(--h) - 1px); overflow: hidden; justify-content: center; align-items: center; color: #000; }
tbody th .cell { align-items: flex-end; color: inherit; }
tbody th.skip .cell { height: calc(var(--h) - 3px); }
#grid .ink { border-color: #000; }
#grid .thick-r { border-right: 2px solid #000; }
#grid .thick-b { border-bottom: 2px solid #000; }
.thick-b .cell { height: calc(var(--h) - 2px); }
.dark { background: #008000; }
.name { background: #92d050; }
.name .cell { font-weight: 700; font-size: 12px; line-height: 16px; text-align: center; white-space: nowrap; }
.amber { background: #ffc000; }
.amber .cell { justify-content: flex-end; align-items: flex-end; font-size: 10px; line-height: 11px; padding-right: 2px; }
.task-text .cell { justify-content: flex-start; align-items: flex-end; font: 10px/12px "DejaVu Serif Condensed", "DejaVu Serif", serif; padding: 0 0 0 2px; white-space: nowrap; }
.none { background: #edf9e0; }
.hit { background: #ffffcc; }
.hit .cell { font-size: 22px; line-height: 20px; }
.sum { background: #ff0; }
.sum .cell { font-size: 17px; line-height: 20px; justify-content: flex-end; padding-right: 3px; }
#grid td.here { position: relative; overflow: visible; }
.here .mark { position: absolute; inset: -2px; border: 2px solid #217346; }
.here .mark::after { content: ""; position: absolute; right: -4px; bottom: -3px; width: 6px; height: 6px; background: #217346; border: 1px solid #fff; border-width: 1px 0 0 1px; }
.vscroll { width: 21px; padding: 2px 4px 0 3px; display: flex; flex-direction: column; background: linear-gradient(#f0f0f0, #f0f0f0) 3px 0 / 15px 100% no-repeat; }
.vscroll button, .hscroll button { width: 15px; height: 15px; border: 1px solid #ababab; display: flex; align-items: center; justify-content: center; background: #fff; flex: none; }
.vthumb { flex: 240; margin-top: 49px; border: 1px solid #ababab; background: #fff; }
.vrest { flex: 480; }

/* sheet tabs */
.sheets { display: flex; height: 28px; flex: none; background: #f5f5f5; border-top: 1px solid #ababab; }
.nav { width: 100px; display: flex; align-items: center; gap: 24px; padding-left: 26px; }
.nav .tri { background: #bbb; }
.sheet-tab { width: 60px; height: 25px; margin-top: -1px; background: #fff; border: 1px solid #ababab; border-width: 0 1px 2px; border-bottom-color: #217346; color: #217346; font-weight: 700; font-size: 12px; }
.add { margin-left: 32px; }
.push { margin: 7px 15px 0 auto; }
.hscroll { width: 38%; max-width: 730px; margin-right: 21px; display: flex; height: 15px; margin-top: 6px; background: #e8e8e8; }
.hthumb { flex: 1; border: 1px solid #ababab; border-left: 0; background: #fff; }
.hrest { width: 22px; }

/* status */
.status { display: flex; height: 22px; flex: none; background: #217346; color: #fff; align-items: center; padding-right: 7px; }
.ready { margin: 0 auto 0 8px; font-size: 11px; line-height: 20px; align-self: flex-start; }
.view { width: 38px; height: 22px; display: flex; align-items: center; justify-content: center; padding-bottom: 2px; }
.view.on { background: #0e6434; }
.zoom { display: flex; align-items: center; gap: 4px; margin: 0 15px 0 4px; }
.zoom input { appearance: none; width: 100px; height: 12px; background: linear-gradient(#fff, #fff) center / 100% 1px no-repeat, linear-gradient(#fff, #fff) center / 1px 5px no-repeat; }
.zoom input::-webkit-slider-thumb { appearance: none; width: 4px; height: 11px; background: #fff; }
.pc { font-size: 11px; }

/* taskbar */
.taskbar { display: flex; height: 40px; flex: none; border-top: 1px solid #8b9bb5; background: linear-gradient(100deg, #16284a, #1e3157 6%, #2b4271 24%, #294076 60%, #2e4575 78%, #364b79 87%, #2c3c5e 91%, #25355a 100%); }
.orb { width: 54px; display: flex; align-items: center; justify-content: center; margin-right: 6px; overflow: hidden; }
.task { width: 58px; height: 39px; margin-right: 4px; display: flex; align-items: center; justify-content: center; border: 1px solid #a3afc4; border-radius: 3px; background: linear-gradient(160deg, #8d99b2, #52648a 50%, #3f5485); }
.task.pile { width: 50px; margin-right: 12px; box-shadow: 4px 0 0 -1px #3a4c75, 5px 0 0 -1px #a3afc4; }
.task.plain { background: none; border-color: transparent; }
.task.active { background: linear-gradient(160deg, #dfe6f0, #a5b0c4 50%, #8795b2); border-color: #dfe6f0; }
.tray { margin-left: auto; display: flex; align-items: center; gap: 9px; color: #fff; }
.tray .arr { background: #fff; margin: 4px 4px 0 8px; }
.lang { margin-bottom: 6px; }
.clock { display: flex; flex-direction: column; align-items: center; line-height: 17px; width: 74px; margin-left: 1px; }
.peek { width: 14px; border: 1px solid #8493ab; background: linear-gradient(160deg, #7d889c, #2b3a5a 60%); }
```

FILE: sheet.js
```js
const cols = [['A',40],['B',40],['C',123],['D',227],['E',89],['F',71],['G',82],['H',68],['I',55],['J',48],['K',73],['L',60],['M',77],['N',40],['O',58],
  ...['P','Q','R','S','T','U','V','W','X','Y','Z','AA','AB','AC','AD','AE','AF','AG'].map(c => [c, 40])];

const people = ['Катерина18-12','Иринка111','Елена<br>Давыдова','galina','Аметист','дядя<br>Саша','Кузьмина<br>Олеся','Михаил<br>Мик','Джулс','Ленус<br>яЯ','Попова'];

// row number, height, task number, text, columns marked with 1
const tasks = [
  [9,50,1,'1. Последний раз в этом году организовать<br>с друзьями или семьей шашлыки на<br>природе.','GO'],
  [10,34,2,'2. Сделать венок из осенних кленовых<br>листьев.','HN'],
  [11,33,3,'3. Устроить фотосессию на фоне<br>разноцветной природы.','EFGHKLMNO'],
  [12,30,4,'4. Провести вечер у камина с кружечкой<br>горячего шоколада.','J'],
  [13,45,5,'5. Купить себе новые перчатки, или шарф,<br>или уютный свитер. Купить себе хоть что-<br>то новое и красивое.','EF'],
  [14,32,6,'6. Испечь шарлотку по новому рецепту.<br>Или по старому любимому рецепту.','G'],
  [16,46,8,'8. Устроить себе выходной с просмотром<br>любимых фильмов – и больше ничего не<br>делать в этот день.','J'],
  [17,30,9,'9. Найти свою любимую теплую пижаму.','EFJ'],
  [18,44,10,'10. Приготовить тыкву. Даже если вы её не<br>любите, осенью обязательно нужно<br>приготовить хоть один раз тыкву.','E'],
  [19,32,11,'11. Покататься на велосипеде в осеннем<br>парке.','L'],
  [20,17,12,'12. Сходить за грибами.','I'],
  [21,31,13,'13. Полежать на шуршащих листьях,<br>разглядывая небо.','FGHJKL'],
  [22,22,14,'14. Каждый вечер обнимать кошку.','E'],
  [23,33,15,'15. Пускать мыльные пузыри с балкона,<br>любоваться ими в лучах солнца.','EG'],
  [25,44,17,'17. Купить на распродажах одежду на<br>следующее лето. А потом убрать её<br>подальше и достать уютные теплые<br>вещи.','EH'],
  [26,41,18,'18. Найти новый сорт чая и брать его с<br>собой в термосе на работу, угощать коллег.','HJ'],
  [27,22,19,'19. Перечитать любимую книгу.','FGJ'],
  [28,21,20,'20. Приобрести новый веселый зонт.','F'],
  [33,22,25,'25. По вечерам зажигать свечи.','EHJ'],
  [34,38,26,'26. Наклеить соседям на двери<br>распечатанные на листочках пожелания<br>счастья и теплой осени.','G'],
  [35,30,27,'27. На компьютерах и гаджетах<br>установить новые обои.','EFGHJM'],
  [37,26,29,'29. Сделать тыквенного монстра на<br>Хеллоуин.','E'],
];
const totals = [10,7,8,7,1,8,2,3,2,2,2];
const hiddenAfter = [14,23,28,35,37];
const scored = 'EFGHIJKLMNO';

const cell = (cls, html = '') => `<td class="${cls}">${html === '' ? '' : `<div class="cell"><span>${html}</span></div>`}</td>`;

function row(num, height, render) {
  const cls = [hiddenAfter.includes(num) ? 'skip' : '', num === 34 ? 'cur' : ''].join(' ');
  const tail = cols.slice(15).map(([c]) => num === 34 && c === 'AD' ? '<td class="here"><div class="mark"></div></td>' : '<td></td>').join('');
  return `<tr style="--h:${height}px;height:${height}px"><th class="${cls}"><div class="cell">${num}</div></th>${render()}${tail}<td></td></tr>`;
}

const head = '<colgroup><col style="width:20px">' + cols.map(c => `<col style="width:${c[1]}px">`).join('') + '<col></colgroup>' +
  '<thead><tr><th class="corner"><i></i></th>' + cols.map(([c]) => `<th class="${c === 'AD' ? 'cur' : ''}">${c}</th>`).join('') + '<th></th></tr></thead>';

let body = row(8, 33, () => '<td></td>' + cell('') + cell('dark ink') + cell('dark ink') +
  people.map((p, i) => cell('name ink thick-b' + (i === 10 ? ' thick-r' : ''), p)).join(''));

for (const [num, h, n, text, marks] of tasks) {
  body += row(num, h, () => '<td></td>' + cell('thick-r') + cell('amber ink thick-r', n) + cell('task-text ink', text) +
    [...scored].map(c => cell((marks.includes(c) ? 'hit' : 'none') + ' ink' + (num === 37 ? ' thick-b' : ''), marks.includes(c) ? 1 : '')).join(''));
}
body += row(39, 22, () => '<td></td><td></td><td></td>' + cell('thick-r') + totals.map(t => cell('sum ink thick-b thick-r', t)).join(''));
body += row(40, 12, () => '<td></td>'.repeat(15));

document.getElementById('grid').innerHTML = head + '<tbody>' + body + '</tbody>';
```
